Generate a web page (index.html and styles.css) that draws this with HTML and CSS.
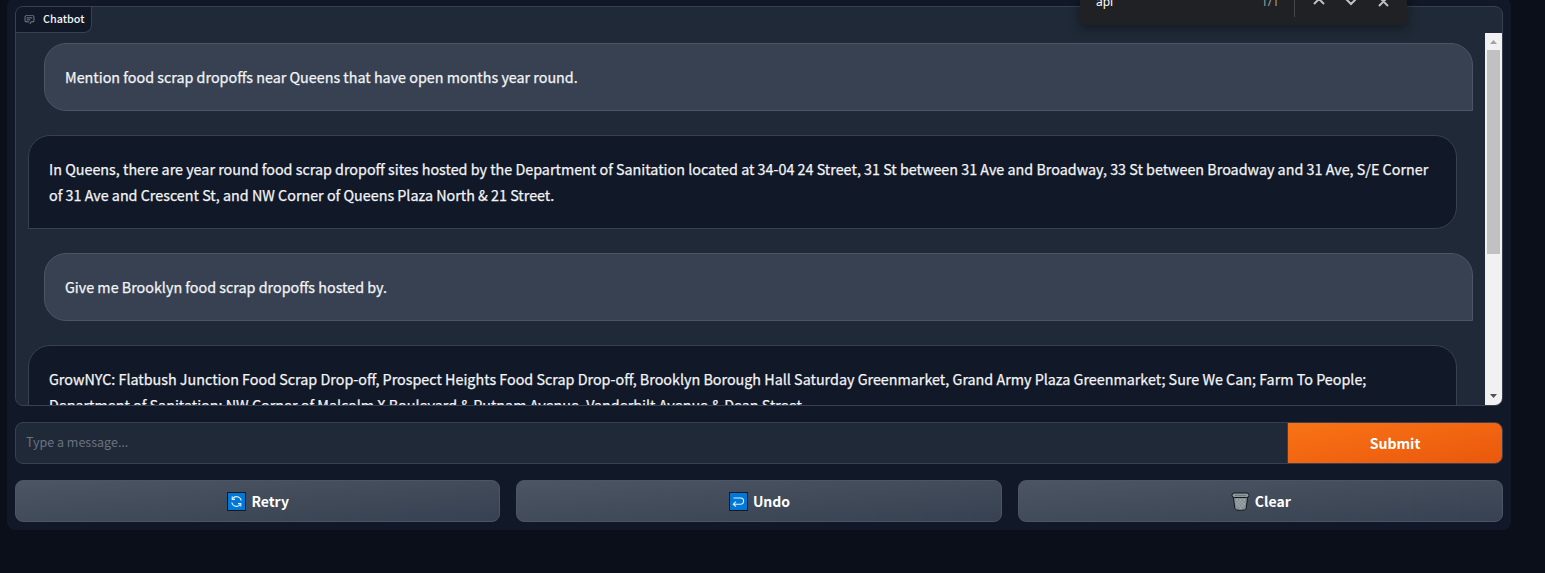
FILE: index.html
```html
<!DOCTYPE html>
<html lang="en">
<head>
<meta charset="utf-8">
<title>Chatbot</title>
<link rel="stylesheet" href="styles.css">
</head>
<body>
<main class="panel">
  <section class="chat">
    <div class="chat-label">
      <svg class="label-icon" viewBox="0 0 32 32" fill="#9ca3af"><path d="M17.740 30L16 29l4-7h6a2 2 0 0 0 2-2V8a2 2 0 0 0-2-2H6a2 2 0 0 0-2 2v12a2 2 0 0 0 2 2h9v2H6a4 4 0 0 1-4-4V8a4 4 0 0 1 4-4h20a4 4 0 0 1 4 4v12a4 4 0 0 1-4 4h-4.840z"/><path d="M8 10h16v2H8zm0 6h10v2H8z"/></svg>
      <span>Chatbot</span>
    </div>
    <div class="chat-body">
      <div class="messages">
        <div class="message user">Mention food scrap dropoffs near Queens that have open months year round.</div>
        <div class="message bot">In Queens, there are year round food scrap dropoff sites hosted by the Department of Sanitation located at 34-04 24 Street, 31 St between 31 Ave and Broadway, 33 St between Broadway and 31 Ave, S/E Corner<br>of 31 Ave and Crescent St, and NW Corner of Queens Plaza North &amp; 21 Street.</div>
        <div class="message user">Give me Brooklyn food scrap dropoffs hosted by.</div>
        <div class="message bot">GrowNYC: Flatbush Junction Food Scrap Drop-off, Prospect Heights Food Scrap Drop-off, Brooklyn Borough Hall Saturday Greenmarket, Grand Army Plaza Greenmarket; Sure We Can; Farm To People;<br>Department of Sanitation: NW Corner of Malcolm X Boulevard &amp; Putnam Avenue, Vanderbilt Avenue &amp; Dean Street.</div>
      </div>
      <div class="scrollbar">
        <svg class="arrow" viewBox="0 0 17 17"><path d="M5 11h7L8.500 7z" fill="#a3a3a3"/></svg>
        <div class="track"><div class="thumb"></div></div>
        <svg class="arrow" viewBox="0 0 17 17"><path d="M5 6h7L8.500 10z" fill="#505050"/></svg>
      </div>
    </div>
  </section>
  <form class="composer">
    <input class="field" type="text" placeholder="Type a message...">
    <button class="submit" type="button">Submit</button>
  </form>
  <div class="actions">
    <button class="action" type="button">
      <svg class="emoji" viewBox="0 0 19 19"><rect x=".5" y=".5" width="18" height="18" fill="#0078d7" stroke="#15181e"/><g fill="none" stroke="#e6f2fc" stroke-width="1.100"><path d="M5.500 6.800a4.800 4.800 0 0 1 8.700 1.700M13.500 12.200a4.800 4.800 0 0 1-8.700-1.700"/><path d="M5.200 4.600v2.800h2.800M13.800 14.400v-2.800H11"/></g></svg>
      <span>Retry</span>
    </button>
    <button class="action" type="button">
      <svg class="emoji" viewBox="0 0 19 19"><rect x=".5" y=".5" width="18" height="18" fill="#0078d7" stroke="#15181e"/><path d="M4.500 6h7a2.900 2.900 0 0 1 0 6.200H4.500M7 9.700l-2.700 2.500L7 14.700" fill="none" stroke="#e6f2fc" stroke-width="1.100"/></svg>
      <span>Undo</span>
    </button>
    <button class="action" type="button">
      <svg class="emoji" viewBox="0 0 19 19"><path d="M2.200 4l1.600 12.200q.3 2.200 5.700 2.200t5.700-2.200L16.800 4z" fill="#7f8c90" stroke="#15181e"/><path d="M5 7l8.500 9M8 6.500l6 6.500M12 6.500l2.500 3M4.500 10l6 7M14 7l-8.500 9M11 6.500L5 13M7 6.500L4.500 9.500M14.500 10l-6 7" stroke="#a8b3b6" stroke-width=".7" fill="none"/><rect x="1" y="1" width="17" height="4.500" rx="2.200" fill="#8e999c" stroke="#15181e"/><path d="M4 3.500h11" stroke="#6d797d"/></svg>
      <span>Clear</span>
    </button>
  </div>
</main>
<aside class="findbar">
  <span class="query">api</span>
  <span class="count">1/1</span>
  <i class="divider"></i>
  <svg class="find-icons" viewBox="0 0 80 20" fill="none" stroke="#bdc1c6" stroke-width="2"><path d="M4 13l5-5 5 5M36 8l5 5 5-5M69 6l9 9M78 6l-9 9"/></svg>
</aside>
</body>
</html>
```
FILE: styles.css
```css
* { box-sizing: border-box; }

body {
  margin: 0;
  height: 573px;
  overflow: hidden;
  background: #0b0f19;
  color: #f3f4f6;
  font-family: "Noto Sans CJK SC", "Noto Sans", sans-serif;
}

.panel {
  display: flex;
  flex-direction: column;
  gap: 16px;
  width: 1504px;
  margin: -2px 0 0 7px;
  padding: 8px;
  border-radius: 8px;
  background: #111827;
}

.chat {
  display: flex;
  flex-direction: column;
  align-items: flex-start;
  height: 400px;
  overflow: hidden;
  border: 1px solid #374151;
  border-radius: 8px;
  background: #1f2937;
}

.chat-label {
  display: flex;
  align-items: center;
  gap: 8px;
  flex: none;
  width: 76px;
  height: 26px;
  padding-left: 8px;
  border: solid #374151;
  border-width: 0 1px 1px 0;
  border-radius: 0 0 8px 0;
  background: #111827;
  font-size: 10.8px;
  font-weight: 500;
  line-height: 20px;
  white-space: nowrap;
}

.chat-label span { padding-bottom: 3px; }

.label-icon { width: 11px; height: 11px; flex: none; }

.chat-body {
  display: flex;
  align-self: stretch;
  flex: 1;
  min-height: 0;
}

.messages {
  display: flex;
  flex-direction: column;
  flex: 1;
  gap: 24px;
  min-width: 0;
  padding: 10px 12px 0;
  overflow: hidden;
}

.message {
  flex: none;
  width: 1429px;
  padding: 20px;
  border: 1px solid #374151;
  border-radius: 22px;
  font-size: 14.33px;
  font-weight: 400;
  line-height: 26px;
  white-space: nowrap;
  -webkit-text-stroke: .25px currentColor;
}

.user {
  align-self: flex-end;
  border-color: #4b5563;
  border-bottom-right-radius: 0;
  background: #374151;
}

.bot {
  border-bottom-left-radius: 0;
  background: #111827;
}

.scrollbar {
  display: flex;
  flex-direction: column;
  width: 17px;
  background: #f1f1f1;
}

.arrow { display: block; width: 17px; height: 17px; }
.track { flex: 1; padding: 0 2px; }
.thumb { height: 204px; background: #c1c1c1; }

.composer {
  display: flex;
  height: 42px;
  margin: 0;
  overflow: hidden;
  border: 1px solid #374151;
  border-radius: 8px;
  background: #1f2937;
}

.field {
  flex: 1;
  padding: 0 10px 3px;
  border: 0;
  border-right: 1px solid #374151;
  background: none;
  font: 400 12.5px "Noto Sans CJK SC", sans-serif;
}

.field::placeholder { color: #6b7280; opacity: 1; }

.submit {
  width: 214px;
  padding: 0;
  border: 0;
  background: linear-gradient(to bottom right, #f97316, #ea580c);
  color: #fff;
  font: 700 14.1px/20px "Noto Sans CJK SC", sans-serif;
}

.actions { display: flex; gap: 16px; }

.action {
  display: flex;
  flex: 1;
  align-items: center;
  justify-content: center;
  gap: 5px;
  height: 42px;
  padding: 0;
  border: 1px solid #4b5563;
  border-radius: 8px;
  background: linear-gradient(to bottom right, #4b5563, #374151);
  color: #fff;
  font: 700 14px/20px "Noto Sans CJK SC", sans-serif;
}

.emoji { width: 19px; height: 19px; margin-left: 1px; }

/* Browser find bar, cut off by the top of the window */
.findbar {
  position: absolute;
  top: -22px;
  left: 1080px;
  display: flex;
  align-items: center;
  width: 327px;
  height: 47px;
  padding: 0 17px 2px 16px;
  border-radius: 0 0 4px 4px;
  background: #202124;
  box-shadow: 0 3px 12px rgba(0, 0, 0, .4);
  font: 12px "Noto Sans", sans-serif;
}

.query, .count { padding-top: 2px; }
.query { width: 165px; color: #fff; }
.count { width: 33px; color: #9aa0a6; }
.divider { width: 1px; height: 29px; margin-top: 3px; background: #45474b; }
.find-icons { width: 80px; height: 20px; margin-left: 15px; }
```
